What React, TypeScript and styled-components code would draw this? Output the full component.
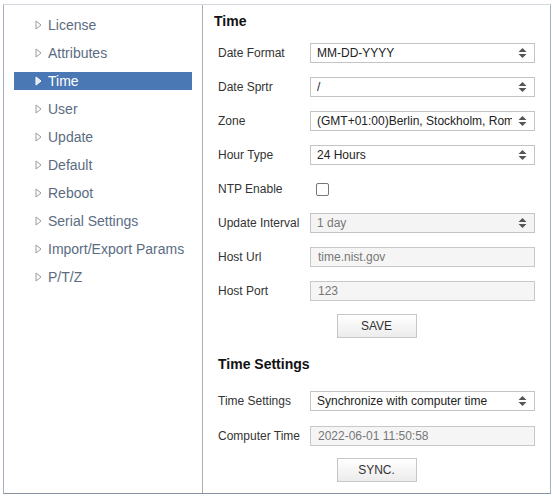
import React from "react";
import styled, { createGlobalStyle } from "styled-components";

const GlobalStyle = createGlobalStyle`
  html, body {
    margin: 0;
    padding: 0;
    background: #fff;
    font-family: "Liberation Sans", Arial, sans-serif;
  }
`;

const menuItems = [
  "License",
  "Attributes",
  "Time",
  "User",
  "Update",
  "Default",
  "Reboot",
  "Serial Settings",
  "Import/Export Params",
  "P/T/Z",
];

const Arrow = ({ active }: { active?: boolean }) => (
  <svg width="7" height="10" viewBox="0 0 7 10">
    <path
      d="M1 1 L6 5 L1 9 Z"
      fill={active ? "#dfe8f5" : "none"}
      stroke={active ? "#ffffff" : "#9a9a9a"}
      strokeWidth="1"
      strokeLinejoin="round"
    />
  </svg>
);

const UpDown = () => (
  <svg width="9" height="12" viewBox="0 0 9 12">
    <path d="M4.5 1 L8.5 5 L0.5 5 Z" fill="#555" />
    <path d="M4.5 11 L8.5 7 L0.5 7 Z" fill="#555" />
  </svg>
);

const Select = ({ value, disabled }: { value: string; disabled?: boolean }) => (
  <SelectBox $disabled={disabled}>
    <SelectText>{value}</SelectText>
    <UpDown />
  </SelectBox>
);

export default function App() {
  return (
    <Page>
      <GlobalStyle />
      <Frame>
        <Sidebar>
          <Menu>
            {menuItems.map((m) => (
              <MenuItem key={m} $active={m === "Time"}>
                <Arrow active={m === "Time"} />
                <span>{m}</span>
              </MenuItem>
            ))}
          </Menu>
        </Sidebar>
        <Content>
          <Heading>Time</Heading>
          <Form $top={13}>
            <Row>
              <Label>Date Format</Label>
              <Select value="MM-DD-YYYY" />
            </Row>
            <Row>
              <Label>Date Sprtr</Label>
              <Select value="/" />
            </Row>
            <Row>
              <Label>Zone</Label>
              <Select value="(GMT+01:00)Berlin, Stockholm, Rome" />
            </Row>
            <Row>
              <Label>Hour Type</Label>
              <Select value="24 Hours" />
            </Row>
            <Row>
              <Label>NTP Enable</Label>
              <Checkbox />
            </Row>
            <Row>
              <Label>Update Interval</Label>
              <Select value="1 day" disabled />
            </Row>
            <Row>
              <Label>Host Url</Label>
              <TextBox>time.nist.gov</TextBox>
            </Row>
            <Row>
              <Label>Host Port</Label>
              <TextBox>123</TextBox>
            </Row>
          </Form>
          <ButtonRow $top={13}>
            <Button>SAVE</Button>
          </ButtonRow>
          <SubHeading>Time Settings</SubHeading>
          <Form $top={18} $gap={15}>
            <Row>
              <Label>Time Settings</Label>
              <Select value="Synchronize with computer time" />
            </Row>
            <Row>
              <Label>Computer Time</Label>
              <TextBox>2022-06-01 11:50:58</TextBox>
            </Row>
          </Form>
          <ButtonRow $top={12}>
            <Button>SYNC.</Button>
          </ButtonRow>
        </Content>
      </Frame>
    </Page>
  );
}

const Page = styled.div`
  padding: 4px 1px 2px 3px;
  width: 552px;
  height: 496px;
  box-sizing: border-box;
`;

const Frame = styled.div`
  display: flex;
  height: 100%;
  box-sizing: border-box;
  border: 1px solid #a8b2bc;
  border-top-color: #d2d8de;
  border-bottom-color: #8693a0;
  background: #fff;
`;

const Sidebar = styled.nav`
  width: 198px;
  border-right: 1px solid #a8b0b8;
  padding-top: 11px;
  box-sizing: content-box;
`;

const Menu = styled.ul`
  list-style: none;
  margin: 0;
  padding: 0 10px;
  display: flex;
  flex-direction: column;
  gap: 10px;
`;

const MenuItem = styled.li<{ $active?: boolean }>`
  height: 18px;
  display: flex;
  align-items: center;
  gap: 6px;
  padding-left: 21px;
  font-size: 14px;
  color: ${(p) => (p.$active ? "#ffffff" : "#5b6c82")};
  background: ${(p) => (p.$active ? "#4a78b5" : "transparent")};
`;

const Content = styled.section`
  flex: 1;
  padding: 7px 0 0 11px;
  display: flex;
  flex-direction: column;
`;

const Heading = styled.h2`
  margin: 0;
  font-size: 14px;
  line-height: 18px;
  font-weight: bold;
  color: #111;
`;

const SubHeading = styled(Heading)`
  margin: 17px 0 0 4px;
`;

const Form = styled.div<{ $top?: number; $gap?: number }>`
  display: flex;
  flex-direction: column;
  gap: ${(p) => p.$gap ?? 14}px;
  margin: ${(p) => p.$top ?? 12}px 0 0 4px;
`;

const Row = styled.div`
  display: flex;
  align-items: center;
  height: 20px;
`;

const Label = styled.label`
  width: 92px;
  font-size: 12px;
  color: #333;
  white-space: nowrap;
`;

const SelectBox = styled.div<{ $disabled?: boolean }>`
  width: 225px;
  height: 20px;
  box-sizing: border-box;
  border: 1px solid #c4c4c4;
  background: ${(p) => (p.$disabled ? "#f4f4f4" : "#fff")};
  color: ${(p) => (p.$disabled ? "#777" : "#222")};
  display: flex;
  align-items: center;
  padding: 0 7px 0 6px;
  gap: 6px;
  font-size: 12px;
`;

const SelectText = styled.span`
  flex: 1;
  overflow: hidden;
  white-space: nowrap;
`;

const TextBox = styled.div`
  width: 225px;
  height: 20px;
  box-sizing: border-box;
  border: 1px solid #c8c8c8;
  background: #f5f5f5;
  color: #777;
  font-size: 12px;
  display: flex;
  align-items: center;
  padding-left: 7px;
`;

const Checkbox = styled.span`
  width: 11px;
  height: 11px;
  margin-left: 6px;
  border: 1px solid #767676;
  border-radius: 2px;
  background: #fff;
`;

const ButtonRow = styled.div<{ $top?: number }>`
  display: flex;
  justify-content: center;
  margin: ${(p) => p.$top ?? 14}px 11px 0 0;
`;

const Button = styled.button`
  width: 80px;
  height: 24px;
  border: 1px solid #c6c6c6;
  background: linear-gradient(#ffffff, #ececec);
  font-family: "Liberation Sans", Arial, sans-serif;
  font-size: 12px;
  color: #333;
  padding: 0;
`;
